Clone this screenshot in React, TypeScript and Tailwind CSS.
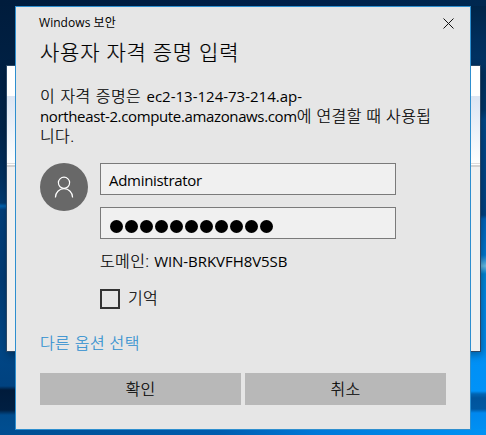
import React from "react";

const LATIN = "text-[15px] font-normal [-webkit-text-stroke:0px]";

const Dot = () => <span className="size-[13px] shrink-0 rounded-full bg-black" />;

function BackWindow() {
  return (
    <div className="absolute left-[6px] top-[65px] flex h-[287px] w-[475px] flex-col border border-[#294766] bg-[#f0f0f0] shadow-[2px_3px_8px_rgba(0,0,0,0.35)]">
      <div className="h-[30px] bg-white" />
      <div className="h-[67px] bg-linear-to-b from-[#dbe5f3] to-[#fdfefe]" />
      <div className="h-px bg-[#dcdcdc]" />
      <div className="h-px bg-white" />
      <div className="h-[2px] bg-[#d2d2d2]" />
    </div>
  );
}

export default function App() {
  return (
    <div className="relative h-[435px] w-[486px] overflow-hidden bg-[#00539c] font-['Open_Sans','Noto_Sans_CJK_KR',sans-serif] text-black">
      <div className="absolute inset-y-0 left-0 w-[15px] bg-[linear-gradient(180deg,#001c3c_0,#00244a_130px,#00305f_180px,#003a70_203px,#0062ae_206px,#003d78_210px,#003a73_280px,#004685_350px,#004280_386px,#001b3b_390px,#001f42_410px,#004b8c_415px,#004f92_435px)]" />
      <div className="absolute inset-y-0 right-0 w-[16px] bg-[linear-gradient(180deg,#002345_0,#002e5c_40px,#003a70_110px,#004c92_120px,#00458a_215px,#0068c4_219px,#007edb_255px,#6ac5f2_266px,#008be0_274px,#008df0_300px,#0092f8_391px,#0065b4_394px,#00549c_398px,#0058a2_409px,#0088ee_413px,#0092f5_435px)]" />
      <div className="absolute inset-x-0 top-0 h-[6px] bg-[linear-gradient(90deg,#001c3c,#00204a_60%,#002850)]" />
      <div className="absolute inset-x-0 bottom-0 h-[6px] bg-[linear-gradient(90deg,#004d90,#005cae_45%,#0078d8_65%,#0092f5)]" />
      <BackWindow />

      <main className="absolute left-[15px] top-[6px] flex h-[424px] w-[456px] flex-col border border-[#2e8fcf] bg-[#e6e6e6] px-6 text-[16px] font-light tracking-[0.4px] [-webkit-text-stroke:0.2px]">
        <header className="flex h-[32px] items-center justify-between">
          <span className="-ml-px text-[12px] font-normal leading-none tracking-[0.05px] [-webkit-text-stroke:0px]">Windows 보안</span>
          <svg className="mr-[-8px] size-[11px]" viewBox="0 0 11 11" fill="none" stroke="#111" strokeWidth="1">
            <path d="M.5 .5l10 10M10.5 .5l-10 10" />
          </svg>
        </header>
        <h1 className="-mt-0.5 h-[49px] whitespace-nowrap text-[21px] leading-[30px] tracking-[0.75px]">사용자 자격 증명 입력</h1>
        <p className="h-[60px] whitespace-nowrap leading-5">
          <span className="[word-spacing:0.7px]">이 자격 증명은 </span><span className={`${LATIN} tracking-normal`}>ec2-13-124-73-214.ap-</span><br />
          <span className={`${LATIN} tracking-[-0.36px]`}>northeast-2.compute.amazonaws.com</span><span>에 연결할 때 사용됩</span><br />
          <span>니다.</span>
        </p>
        <section className="mt-[17px] flex gap-3">
          <div className="size-12 shrink-0 rounded-full bg-[#686868]">
            <svg className="size-12" viewBox="0 0 48 48" fill="none" stroke="white" strokeWidth="1.2">
              <circle cx="24" cy="19.8" r="5.6" />
              <path d="M15.4 34.5a8.6 8.8 0 0 1 17.2 0" />
            </svg>
          </div>
          <div className="flex w-[296px] flex-col">
            <div className="flex h-8 items-center border border-[#7a7a7a] bg-[#f0f0f0] pl-2 pt-0.5">
              <span className={`${LATIN} tracking-[-0.3px]`}>Administrator</span>
            </div>
            <div className="mt-3 flex h-8 items-center gap-[2px] border border-[#7a7a7a] bg-[#f0f0f0] pl-[9px] pt-[6px]">
              {Array.from({ length: 11 }, (_, i) => <Dot key={i} />)}
            </div>
            <div className="mt-3 h-5 whitespace-nowrap leading-5">
              <span>도메인: </span><span className={`${LATIN} tracking-[-0.05px]`}>WIN-BRKVFH8V5SB</span>
            </div>
            <label className="mt-[18px] flex h-5 items-center gap-2">
              <span className="size-5 border-2 border-[#333]" />
              <span className="pb-0.5">기억</span>
            </label>
          </div>
        </section>
        <a className="mt-6 leading-5 text-[#2d8fd0]">다른 옵션 선택</a>
        <footer className="mt-5 flex gap-1">
          <button className="h-8 w-[201px] bg-[#b8b8b8]">확인</button>
          <button className="h-8 w-[201px] bg-[#b8b8b8]">취소</button>
        </footer>
      </main>
    </div>
  );
}
